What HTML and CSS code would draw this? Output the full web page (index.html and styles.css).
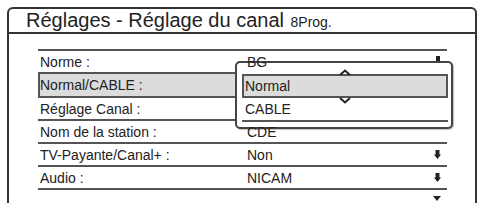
FILE: index.html
```html
<!DOCTYPE html>
<html lang="fr">
<head>
    <meta charset="UTF-8">
    <title>Réglages - Réglage du canal</title>
    <link rel="stylesheet" href="styles.css">
</head>
<body>
    <div class="frame">
        <div class="title">Réglages - Réglage du canal <span class="prog">8Prog.</span></div>

        <div class="list">
            <div class="row no-line">
                <span class="label">Norme :</span>
                <span class="value">BG</span>
            </div>
            <div class="row selected">
                <span class="label">Normal/CABLE :</span>
            </div>
            <div class="row">
                <span class="label">Réglage Canal :</span>
            </div>
            <div class="row">
                <span class="label">Nom de la station :</span>
                <span class="value">CDE</span>
            </div>
            <div class="row">
                <span class="label">TV-Payante/Canal+ :</span>
                <span class="value">Non</span>
                <span class="mark arrow"></span>
            </div>
            <div class="row">
                <span class="label">Audio :</span>
                <span class="value">NICAM</span>
                <span class="mark arrow"></span>
            </div>
            <span class="mark top-mark"></span>
            <span class="mark bottom-mark"></span>

            <!-- liste déroulante ouverte -->
            <div class="popup">
                <svg class="chev chev-up" width="12" height="7" viewBox="0 0 12 7">
                    <polyline points="1,6 6,1.5 11,6" fill="none" stroke="#222" stroke-width="2"/>
                </svg>
                <div class="option selected">Normal</div>
                <svg class="chev chev-down" width="12" height="7" viewBox="0 0 12 7">
                    <polyline points="1,1 6,5.5 11,1" fill="none" stroke="#222" stroke-width="2"/>
                </svg>
                <div class="option">CABLE</div>
            </div>
        </div>
    </div>
</body>
</html>
```

FILE: styles.css
```css
body {
    margin: 0;
    background-color: #fff;
    font-family: "Liberation Sans", Arial, sans-serif;
    color: #222;
    overflow: hidden;
}

.frame {
    margin: 7px 0 0 7px;
    width: 466px;
    height: 194px;
    border: 2px solid #333;
    border-bottom: none;
    border-radius: 6px 6px 0 0;
}

.title {
    height: 23px;
    padding-left: 17px;
    border-bottom: 2px solid #333;
    font-size: 20px;
    line-height: 23px;
    white-space: nowrap;
}

.prog {
    font-size: 14px;
    margin-left: 1px;
}

.list {
    position: relative;
    margin: 15px 0 0 29px;
    width: 409px;
    border-top: 2px solid #555;
}

.row {
    display: flex;
    align-items: center;
    height: 21px;
    border-bottom: 2px solid #555;
    font-size: 14px;
}

.row.no-line {
    border-bottom: none;
}

.row.selected {
    height: 22px;
    border: 2px solid #555;
    background-color: #dcdcdc;
}

.label {
    width: 207px;
    padding-left: 2px;
}

.row.selected .label {
    padding-left: 0;
}

.value {
    flex: 1;
    position: relative;
    z-index: 1;
}

.mark {
    position: absolute;
    right: 7px;
    background-color: #222;
}

.row .mark {
    position: static;
    width: 7px;
    height: 9px;
    margin-right: 6px;
    clip-path: polygon(22% 0, 78% 0, 78% 50%, 100% 50%, 50% 100%, 0 50%, 22% 50%);
}

.top-mark {
    top: 5px;
    width: 4px;
    height: 7px;
    right: 7px;
}

.bottom-mark {
    top: 145px;
    width: 8px;
    height: 5px;
    right: 6px;
    clip-path: polygon(0 0, 100% 0, 50% 100%);
}

.popup {
    position: absolute;
    left: 197px;
    top: 10px;
    width: 206px;
    padding: 11px 3px 5px 5px;
    border: 2px solid #444;
    border-radius: 5px;
    background-color: #fff;
    box-shadow: 1px 1px 1px rgba(0, 0, 0, 0.25);
}

.option {
    height: 22px;
    line-height: 22px;
    font-size: 14px;
    padding-left: 3px;
    border-bottom: 2px solid #555;
}

.option.selected {
    height: 20px;
    line-height: 20px;
    border: 2px solid #555;
    padding-left: 1px;
    background-color: #dcdcdc;
}

.chev {
    position: absolute;
    left: 102px;
}

.chev-up {
    top: 6px;
}

.chev-down {
    top: 34px;
}
```
